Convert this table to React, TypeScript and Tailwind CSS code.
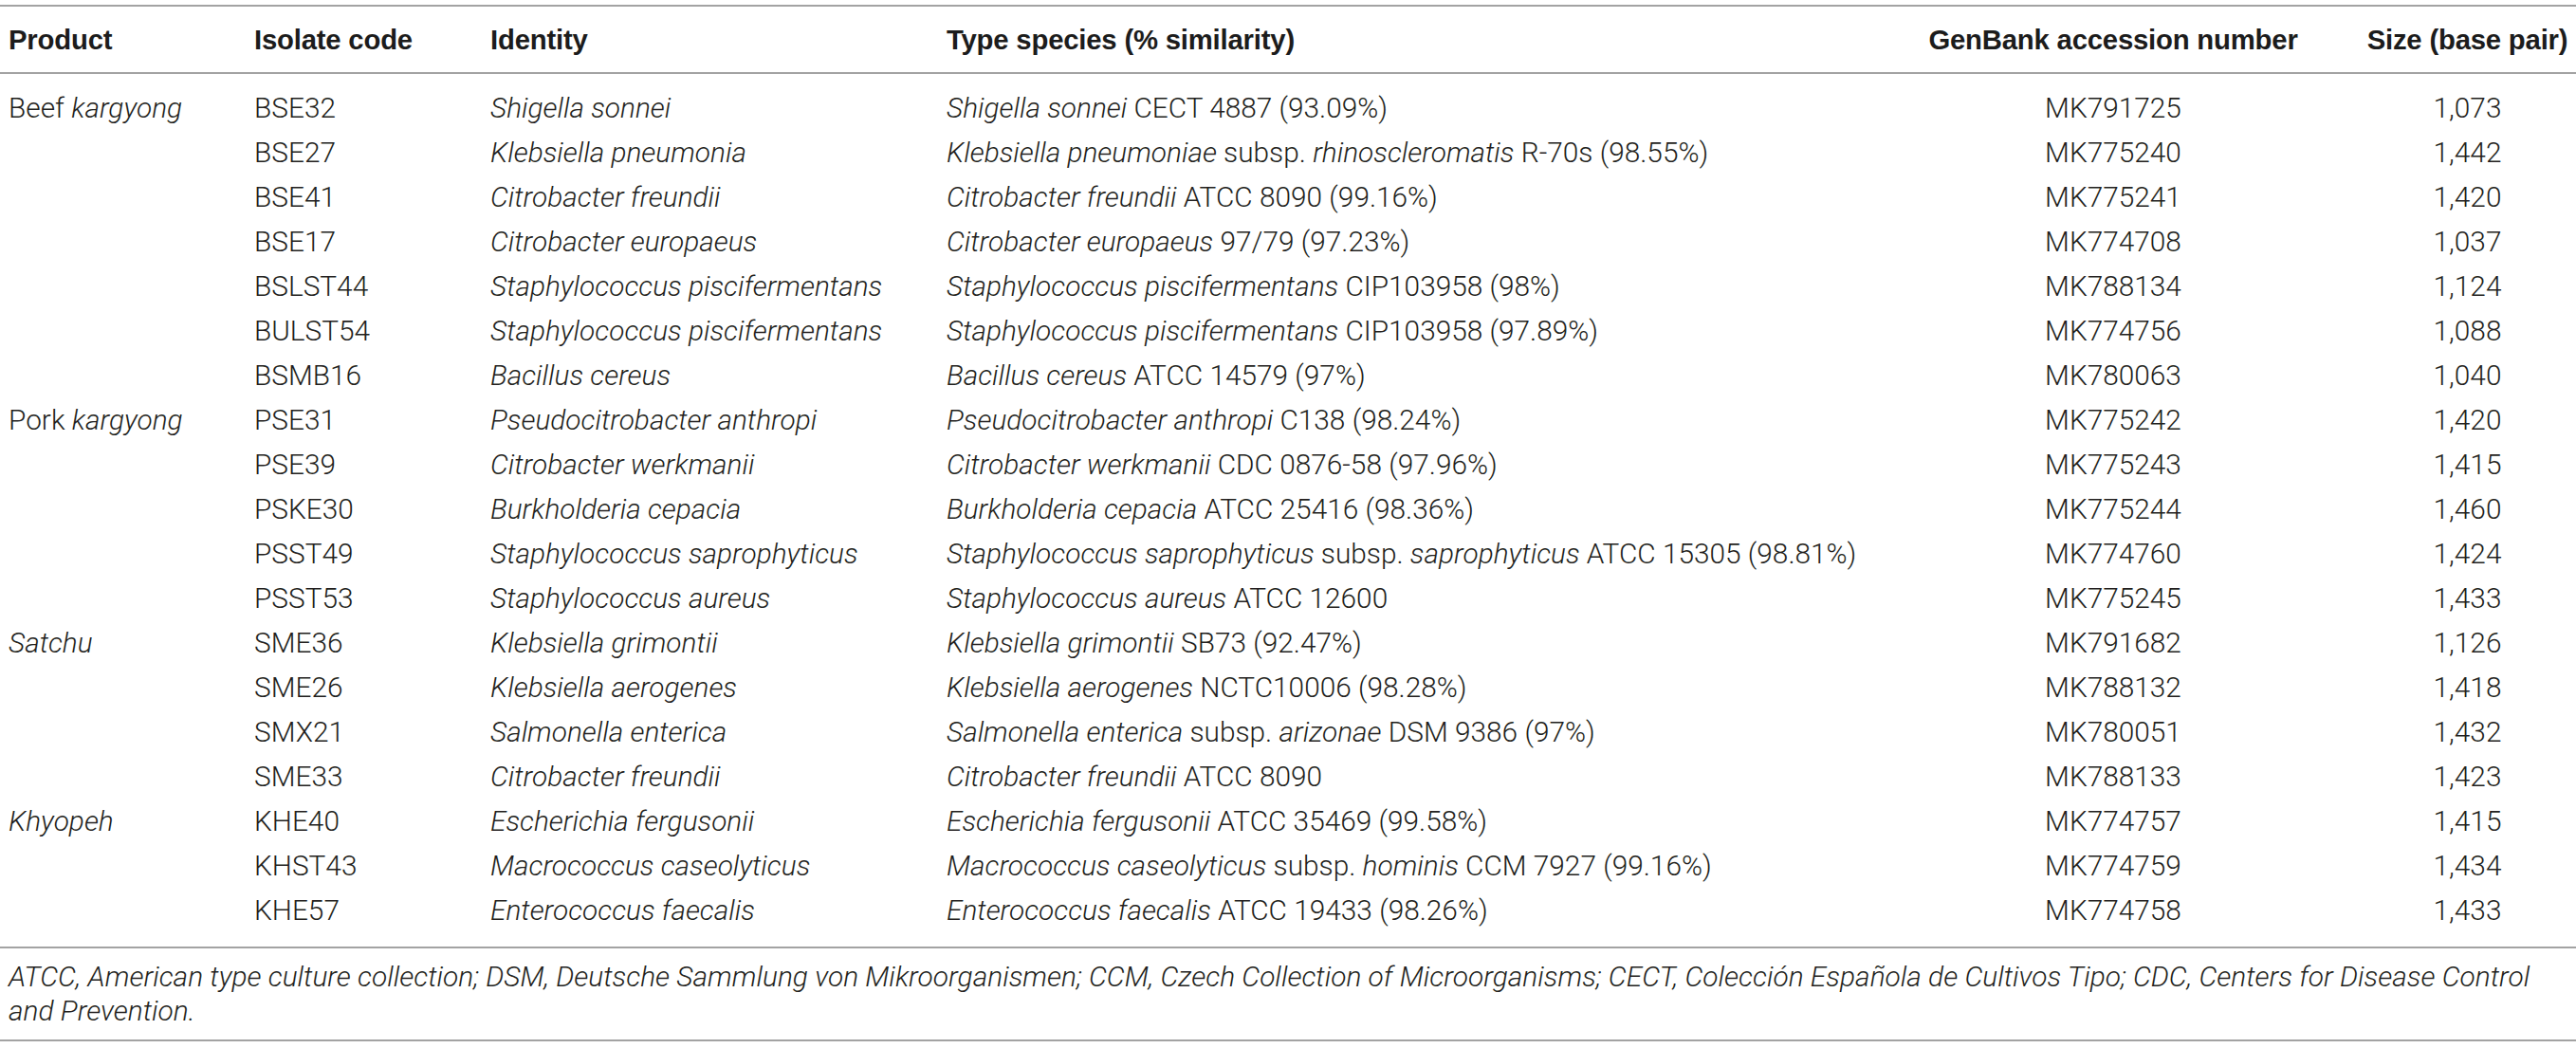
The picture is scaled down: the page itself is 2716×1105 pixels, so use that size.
import React from 'react';

// "_" toggles italic inside a cell string
const Rich: React.FC<{ text: string }> = ({ text }) => (
  <>
    {text.split('_').map((part, i) =>
      i % 2 === 1 ? (
        <i key={i} className="italic">{part}</i>
      ) : (
        <span key={i}>{part}</span>
      )
    )}
  </>
);

const rows = [
  { product: 'Beef _kargyong_', code: 'BSE32', identity: 'Shigella sonnei', type: '_Shigella sonnei_ CECT 4887 (93.09%)', acc: 'MK791725', size: '1,073' },
  { product: '', code: 'BSE27', identity: 'Klebsiella pneumonia', type: '_Klebsiella pneumoniae_ subsp. _rhinoscleromatis_ R-70s (98.55%)', acc: 'MK775240', size: '1,442' },
  { product: '', code: 'BSE41', identity: 'Citrobacter freundii', type: '_Citrobacter freundii_ ATCC 8090 (99.16%)', acc: 'MK775241', size: '1,420' },
  { product: '', code: 'BSE17', identity: 'Citrobacter europaeus', type: '_Citrobacter europaeus_ 97/79 (97.23%)', acc: 'MK774708', size: '1,037' },
  { product: '', code: 'BSLST44', identity: 'Staphylococcus piscifermentans', type: '_Staphylococcus piscifermentans_ CIP103958 (98%)', acc: 'MK788134', size: '1,124' },
  { product: '', code: 'BULST54', identity: 'Staphylococcus piscifermentans', type: '_Staphylococcus piscifermentans_ CIP103958 (97.89%)', acc: 'MK774756', size: '1,088' },
  { product: '', code: 'BSMB16', identity: 'Bacillus cereus', type: '_Bacillus cereus_ ATCC 14579 (97%)', acc: 'MK780063', size: '1,040' },
  { product: 'Pork _kargyong_', code: 'PSE31', identity: 'Pseudocitrobacter anthropi', type: '_Pseudocitrobacter anthropi_ C138 (98.24%)', acc: 'MK775242', size: '1,420' },
  { product: '', code: 'PSE39', identity: 'Citrobacter werkmanii', type: '_Citrobacter werkmanii_ CDC 0876-58 (97.96%)', acc: 'MK775243', size: '1,415' },
  { product: '', code: 'PSKE30', identity: 'Burkholderia cepacia', type: '_Burkholderia cepacia_ ATCC 25416 (98.36%)', acc: 'MK775244', size: '1,460' },
  { product: '', code: 'PSST49', identity: 'Staphylococcus saprophyticus', type: '_Staphylococcus saprophyticus_ subsp. _saprophyticus_ ATCC 15305 (98.81%)', acc: 'MK774760', size: '1,424' },
  { product: '', code: 'PSST53', identity: 'Staphylococcus aureus', type: '_Staphylococcus aureus_ ATCC 12600', acc: 'MK775245', size: '1,433' },
  { product: '_Satchu_', code: 'SME36', identity: 'Klebsiella grimontii', type: '_Klebsiella grimontii_ SB73 (92.47%)', acc: 'MK791682', size: '1,126' },
  { product: '', code: 'SME26', identity: 'Klebsiella aerogenes', type: '_Klebsiella aerogenes_ NCTC10006 (98.28%)', acc: 'MK788132', size: '1,418' },
  { product: '', code: 'SMX21', identity: 'Salmonella enterica', type: '_Salmonella enterica_ subsp. _arizonae_ DSM 9386 (97%)', acc: 'MK780051', size: '1,432' },
  { product: '', code: 'SME33', identity: 'Citrobacter freundii', type: '_Citrobacter freundii_ ATCC 8090', acc: 'MK788133', size: '1,423' },
  { product: '_Khyopeh_', code: 'KHE40', identity: 'Escherichia fergusonii', type: '_Escherichia fergusonii_ ATCC 35469 (99.58%)', acc: 'MK774757', size: '1,415' },
  { product: '', code: 'KHST43', identity: 'Macrococcus caseolyticus', type: '_Macrococcus caseolyticus_ subsp. _hominis_ CCM 7927 (99.16%)', acc: 'MK774759', size: '1,434' },
  { product: '', code: 'KHE57', identity: 'Enterococcus faecalis', type: '_Enterococcus faecalis_ ATCC 19433 (98.26%)', acc: 'MK774758', size: '1,433' },
];

const App: React.FC = () => {
  return (
    <div className="w-[2716px] h-[1105px] bg-white pt-[5px] text-[#231f20] font-['Roboto',sans-serif]">
      <div className="h-[73px] border-y-2 border-[#a3a3a3] flex items-center font-['Liberation_Sans',Arial,sans-serif] font-bold text-[29.3px] tracking-[-0.2px] text-[#1c1c1c] whitespace-nowrap">
        <div className="w-[259px] pl-[9px] shrink-0">Product</div>
        <div className="w-[249px] pl-[9px] shrink-0">Isolate code</div>
        <div className="w-[481px] pl-[9px] shrink-0">Identity</div>
        <div className="w-[1039px] pl-[9px] shrink-0">Type species (% similarity)</div>
        <div className="w-[400px] text-center shrink-0">GenBank accession number</div>
        <div className="w-[288px] pl-[64px] pr-[5px] text-center shrink-0">Size (base pair)</div>
      </div>

      <div className="pt-[13px] pb-[14px] font-light text-[29.8px]">
        {rows.map((r, i) => (
          <div key={i} className="h-[47px] flex items-center whitespace-nowrap">
            <div className="w-[259px] pl-[9px] shrink-0"><Rich text={r.product} /></div>
            <div className="w-[249px] pl-[9px] shrink-0">{r.code}</div>
            <div className="w-[481px] pl-[9px] shrink-0 italic">{r.identity}</div>
            <div className="w-[1039px] pl-[9px] shrink-0"><Rich text={r.type} /></div>
            <div className="w-[400px] text-center shrink-0">{r.acc}</div>
            <div className="w-[288px] pl-[64px] pr-[5px] text-center shrink-0">{r.size}</div>
          </div>
        ))}
      </div>

      <div className="border-y-2 border-[#a3a3a3] pt-[12px] pb-[12px] pl-[9px] pr-[5px] italic font-light text-[29.9px] leading-[36px] whitespace-nowrap">
        ATCC, American type culture collection; DSM, Deutsche Sammlung von Mikroorganismen; CCM, Czech Collection of Microorganisms; CECT, Colección Española de Cultivos Tipo; CDC, Centers for Disease Control
        <br />
        and Prevention.
      </div>
    </div>
  );
};

export default App;
